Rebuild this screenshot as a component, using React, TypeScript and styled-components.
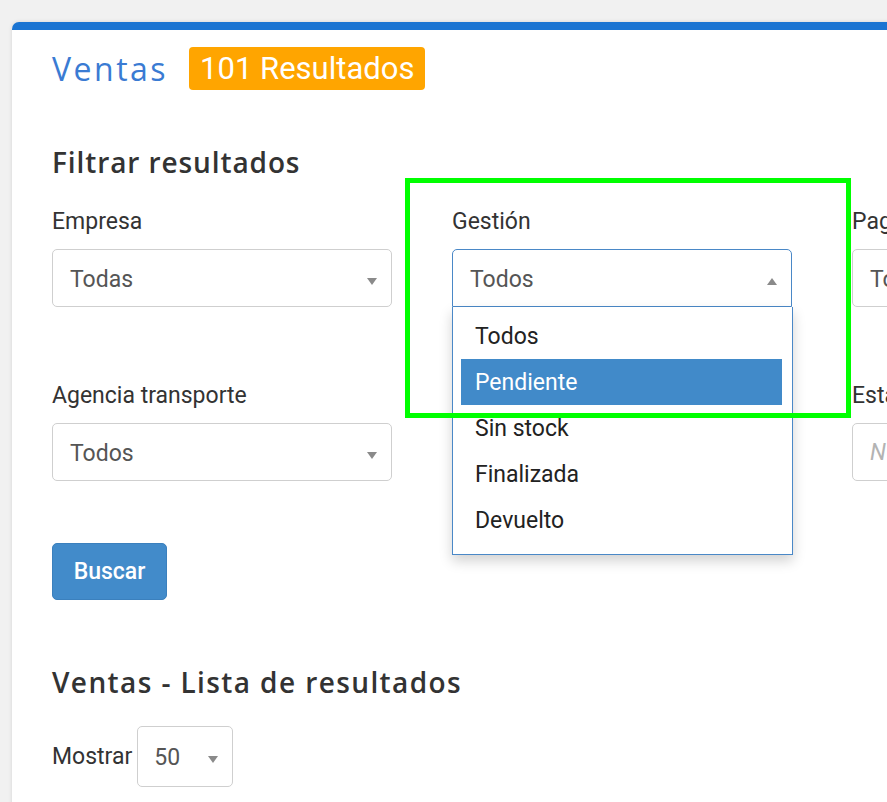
import React from "react";
import styled, { createGlobalStyle } from "styled-components";

const GlobalStyle = createGlobalStyle`
  html, body {
    margin: 0;
    padding: 0;
    background: #f1f1f1;
    overflow: hidden;
  }
  body {
    font-family: Roboto, "Liberation Sans", Arial, sans-serif;
    color: #333;
  }
`;

interface IOption {
  label: string;
  active?: boolean;
}

const gestionOptions: IOption[] = [
  { label: "Todos" },
  { label: "Pendiente", active: true },
  { label: "Sin stock" },
  { label: "Finalizada" },
  { label: "Devuelto" },
];

const Arrow: React.FC<{ up?: boolean }> = ({ up }) => (
  <ArrowIcon width="10" height="7" viewBox="0 0 10 7">
    {up ? (
      <polygon points="0,7 10,7 5,0" fill="#8a8a8a" />
    ) : (
      <polygon points="0,0 10,0 5,7" fill="#8a8a8a" />
    )}
  </ArrowIcon>
);

const App: React.FC = () => {
  return (
    <>
      <GlobalStyle />
      <Page>
        <Card>
          <TitleRow>
            <PageTitle>Ventas</PageTitle>
            <Badge>101 Resultados</Badge>
          </TitleRow>

          <SectionTitle>Filtrar resultados</SectionTitle>

          <FilterGrid>
            <Field>
              <Label>Empresa</Label>
              <Select>
                <SelectValue>Todas</SelectValue>
                <Arrow />
              </Select>
            </Field>

            <Field>
              <Label>Gestión</Label>
              <Select $open>
                <SelectValue>Todos</SelectValue>
                <Arrow up />
              </Select>
              <OptionList>
                {gestionOptions.map((opt) => (
                  <OptionItem key={opt.label} $active={opt.active}>
                    {opt.label}
                  </OptionItem>
                ))}
              </OptionList>
              <Highlight />
            </Field>

            <Field>
              <Label>Pago</Label>
              <Select>
                <SelectValue>Todos</SelectValue>
                <Arrow />
              </Select>
            </Field>

            <Field>
              <Label>Agencia transporte</Label>
              <Select>
                <SelectValue>Todos</SelectValue>
                <Arrow />
              </Select>
            </Field>

            <Field />

            <Field>
              <Label>Estado envío</Label>
              <TextInput placeholder="Nº seguimiento" />
            </Field>
          </FilterGrid>

          <SearchButton>Buscar</SearchButton>

          <ListTitle>Ventas - Lista de resultados</ListTitle>

          <ShowRow>
            <ShowLabel>Mostrar</ShowLabel>
            <SmallSelect>
              <SelectValue>50</SelectValue>
              <Arrow />
            </SmallSelect>
          </ShowRow>
        </Card>
      </Page>
    </>
  );
};

const Page = styled.div`
  padding: 22px 0 0 12px;
  width: 1400px;
  height: 802px;
  box-sizing: border-box;
`;

const Card = styled.div`
  background: #fff;
  border-top: 8px solid #1a74d2;
  border-radius: 7px 0 0 0;
  box-shadow: 0 0 4px rgba(0, 0, 0, 0.12);
  padding: 17px 0 40px 40px;
  min-height: 900px;
`;

const TitleRow = styled.div`
  display: flex;
  align-items: center;
  gap: 21px;
  height: 43px;
`;

const PageTitle = styled.h1`
  margin: 0;
  font-family: "Open Sans", "DejaVu Sans", sans-serif;
  font-weight: 400;
  font-size: 32px;
  color: #3a7bd3;
  letter-spacing: 2.5px;
`;

const Badge = styled.span`
  display: inline-flex;
  align-items: center;
  height: 43px;
  padding: 0 11px;
  box-sizing: border-box;
  background: #ffa500;
  border-radius: 4px;
  color: #fff;
  font-family: Roboto, sans-serif;
  font-size: 31px;
  font-weight: 400;
`;

const SectionTitle = styled.h2`
  margin: 54px 0 28px;
  font-family: "Open Sans", "DejaVu Sans", sans-serif;
  font-weight: 600;
  font-size: 28px;
  line-height: 36px;
  letter-spacing: 0.9px;
  color: #333;
`;

const ListTitle = styled(SectionTitle)`
  margin: 64px 0 26px;
  letter-spacing: 1.4px;
`;

const FilterGrid = styled.div`
  display: grid;
  grid-template-columns: repeat(3, 340px);
  column-gap: 60px;
  row-gap: 75px;
`;

const Field = styled.div`
  position: relative;
  display: flex;
  flex-direction: column;
`;

const Label = styled.label`
  display: block;
  font-size: 23px;
  line-height: 28px;
  margin-bottom: 13px;
  color: #333;
`;

const Select = styled.div<{ $open?: boolean }>`
  display: flex;
  align-items: center;
  justify-content: space-between;
  height: 58px;
  box-sizing: border-box;
  padding: 0 14px 0 17px;
  border: 1px solid ${(p) => (p.$open ? "#4a88c7" : "#cfcfcf")};
  border-radius: ${(p) => (p.$open ? "5px 5px 0 0" : "5px")};
  background: #fff;
`;

const SelectValue = styled.span`
  font-size: 23px;
  color: #555;
  margin-top: 2px;
`;

const ArrowIcon = styled.svg`
  flex-shrink: 0;
  margin-top: 6px;
`;

const TextInput = styled.input`
  height: 58px;
  box-sizing: border-box;
  padding: 0 17px;
  border: 1px solid #cfcfcf;
  border-radius: 5px;
  font-family: Roboto, sans-serif;
  font-size: 23px;
  outline: none;

  &::placeholder {
    color: #b3b3b3;
    font-style: italic;
  }
`;

const OptionList = styled.ul`
  position: absolute;
  top: 99px;
  left: 0;
  width: 341px;
  height: 248px;
  box-sizing: border-box;
  margin: 0;
  padding: 6px 10px 0 8px;
  list-style: none;
  background: #fff;
  border: 1px solid #4a88c7;
  border-top: none;
  box-shadow: 0 6px 12px rgba(0, 0, 0, 0.18);
  z-index: 2;
`;

const OptionItem = styled.li<{ $active?: boolean }>`
  height: 46px;
  display: flex;
  align-items: center;
  padding-left: 14px;
  font-size: 23px;
  color: ${(p) => (p.$active ? "#fff" : "#222")};
  background: ${(p) => (p.$active ? "#418ac9" : "transparent")};
`;

/* green marker frame around the Gestión filter */
const Highlight = styled.div`
  position: absolute;
  left: -47px;
  top: -30px;
  width: 446px;
  height: 240px;
  box-sizing: border-box;
  border: 5px solid #00ff00;
  z-index: 3;
  pointer-events: none;
`;

const SearchButton = styled.button`
  display: block;
  margin-top: 62px;
  width: 115px;
  height: 57px;
  border: 1px solid #3b80bd;
  border-radius: 5px;
  background: #428bca;
  color: #fff;
  font-family: Roboto, sans-serif;
  font-size: 23px;
  font-weight: 500;
  cursor: pointer;
`;

const ShowRow = styled.div`
  display: flex;
  align-items: center;
  gap: 5px;
`;

const ShowLabel = styled.span`
  font-size: 23px;
  color: #333;
`;

const SmallSelect = styled(Select)`
  width: 96px;
  height: 61px;
  padding: 0 14px 0 16px;
`;

export default App;
